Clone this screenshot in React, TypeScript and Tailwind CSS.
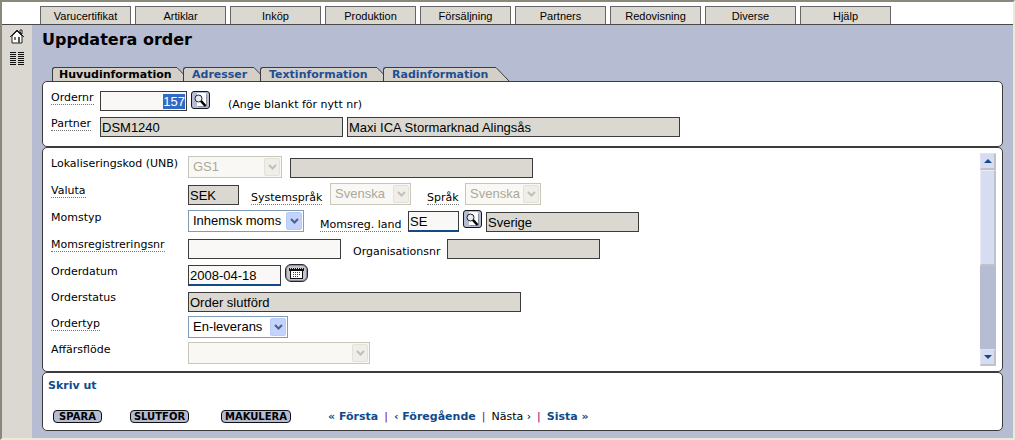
import React, { useEffect, useRef } from 'react';
import clsx from 'clsx';

const menuItems = ['Varucertifikat', 'Artiklar', 'Inköp', 'Produktion', 'Försäljning', 'Partners', 'Redovisning', 'Diverse', 'Hjälp'];

const tabs = [
  { label: 'Huvudinformation', width: 'w-[124px]' },
  { label: 'Adresser', width: 'w-[70px]' },
  { label: 'Textinformation', width: 'w-[116px]' },
  { label: 'Radinformation', width: 'w-[112px]' },
];

interface LabelProps {
  htmlFor: string;
  dotted?: boolean;
  className?: string;
  children: React.ReactNode;
}

const Label: React.FC<LabelProps> = ({ htmlFor, dotted, className, children }) => (
  <label htmlFor={htmlFor} className={clsx('shrink-0 whitespace-nowrap', className)}>
    <span className={clsx('block w-fit h-[14px] leading-[13px]', dotted && 'border-b border-dotted border-[#777]')}>{children}</span>
  </label>
);

interface FieldProps extends React.InputHTMLAttributes<HTMLInputElement> {
  required?: boolean;
}

const Field = React.forwardRef<HTMLInputElement, FieldProps>(({ className, required, ...props }, ref) => (
  <input
    ref={ref}
    type="text"
    className={clsx(
      "h-5 shrink-0 border border-[#3c3c3c] px-px font-['Liberation_Sans',Arial,sans-serif] text-[13px] leading-4 outline-none selection:bg-[#316ac5] selection:text-white",
      props.readOnly ? 'bg-[#dad8d0]' : 'bg-[#f9f8f7]',
      required && 'h-[21px] border-b-2 border-b-[#104a8c]',
      className
    )}
    {...props}
  />
));

interface DropDownProps {
  id: string;
  value: string;
  disabled?: boolean;
  className: string;
}

const DropDown: React.FC<DropDownProps> = ({ id, value, disabled, className }) => (
  <div className={clsx('relative h-[22px] shrink-0', className)}>
    <select
      id={id}
      disabled={disabled}
      defaultValue={value}
      className={clsx(
        "block h-full w-full appearance-none border pl-1 font-['Liberation_Sans',Arial,sans-serif] text-[13px] opacity-100",
        disabled ? 'border-[#c9c7ba] bg-[#f9f8f5] text-[#aca899]' : 'border-[#7f9db9] bg-white text-black'
      )}
    >
      <option>{value}</option>
    </select>
    <span
      className={clsx(
        'pointer-events-none absolute right-0.5 top-0.5 flex h-[18px] w-4 items-center justify-center rounded-[2px] border',
        disabled ? 'border-[#e4e2d8] bg-[#efeee8] text-[#c2c0b5]' : 'border-[#b9cbf3] bg-[#c3d3fd] text-[#4d6185]'
      )}
    >
      <svg width="9" height="6" viewBox="0 0 9 6" fill="none" stroke="currentColor" strokeWidth="2">
        <path d="M1 1l3.5 3.5L8 1" />
      </svg>
    </span>
  </div>
);

const SearchButton: React.FC<{ label: string }> = ({ label }) => (
  <button type="button" aria-label={label} className="flex h-[18px] w-[19px] shrink-0 items-center justify-center self-start rounded-[3px] border border-[#16161e] bg-[#b6bcd2]">
    <svg width="15" height="14" viewBox="0 0 15 14">
      <path d="M4 0h8l1 1v12H4z" fill="#fff" />
      <path d="M13.5 2v11.5H5" fill="none" stroke="#8b8f9f" />
      <circle cx="5.5" cy="5.5" r="3.5" fill="#e8ebf2" stroke="#222" />
      <path d="M8 8l4.5 5" stroke="#000" strokeWidth="2.6" />
    </svg>
  </button>
);

const CalendarButton = () => (
  <button type="button" aria-label="Välj datum" className="flex h-[18px] w-[23px] shrink-0 items-center justify-center self-start rounded-[6px] border border-[#25252b] bg-[#c4c6cf] shadow-[inset_0_0_0_1px_#8c8e98]">
    <svg width="15" height="12" viewBox="0 0 15 12" shapeRendering="crispEdges">
      <path d="M1 3h13v9H1z" fill="#111" />
      <path d="M2 4h11v7H2z" fill="#fff" />
      <path d="M0 1h15v3H0z" fill="#111" />
      <path d="M1 1h1v1H1zM3 1h1v1H3zM5 1h1v1H5zM7 1h1v1H7zM9 1h1v1H9zM11 1h1v1h-1zM13 1h1v1h-1z" fill="#ddd" />
      <path d="M4 5.5h8M4 7.5h8M4 9.5h6" stroke="#2a3f6a" strokeDasharray="1 1" />
    </svg>
  </button>
);

const ActionButton: React.FC<{ className: string; children: string }> = ({ className, children }) => (
  <button type="button" className={clsx('h-[13px] rounded-[4px] border border-[#111] bg-[#b6bcd2] text-[10px] font-bold leading-[11px] text-black', className)}>
    {children}
  </button>
);

const Row: React.FC<{ compact?: boolean; label: React.ReactNode; children: React.ReactNode }> = ({ compact, label, children }) => (
  <div className={clsx('flex items-start', compact ? 'h-[26px]' : 'h-[27px]')}>
    <div className="w-[137px] shrink-0 pt-px">{label}</div>
    <div className="flex h-[22px] items-end gap-1">{children}</div>
  </div>
);

const ScrollButton: React.FC<{ down?: boolean }> = ({ down }) => (
  <button type="button" aria-label={down ? 'Rulla ned' : 'Rulla upp'} className="flex h-[17px] w-4 items-center justify-center border border-b-2 border-r-2 border-[#dfe3f3] border-b-[#bfc3c8] border-r-[#bfc3c8] bg-[#d6dcf2]">
    <svg width="8" height="4" viewBox="0 0 8 4" fill="#104a94">
      <path d={down ? 'M0 0h8L4 4z' : 'M0 4h8L4 0z'} />
    </svg>
  </button>
);

export default function App() {
  const orderRef = useRef<HTMLInputElement>(null);

  // Order number is preselected so a new one can be typed directly
  useEffect(() => {
    orderRef.current?.focus();
    orderRef.current?.select();
  }, []);

  return (
    <div className="flex min-h-screen flex-col border-b-2 border-l-2 border-r-2 border-t-2 border-b-[#ece9d8] border-l-[#8a887a] border-r-[#ece9d8] border-t-[#8a887a] bg-white font-['DejaVu_Sans',Verdana,sans-serif] text-[11px] text-black">
      <nav className="flex h-[23px] items-end gap-1 border-b border-[#4a4a4a] pl-[38px]">
        {menuItems.map(item => (
          <button
            key={item}
            type="button"
            className="h-[18px] w-[91px] border border-b-0 border-[#666] bg-[#dad8d0] font-['Liberation_Sans',Arial,sans-serif] text-[11px] leading-[18px]"
          >
            {item}
          </button>
        ))}
      </nav>

      <div className="flex flex-1">
        <aside className="flex w-[30px] shrink-0 flex-col items-center gap-2 bg-[#dad8d0] pt-1">
          <a href="#hem" aria-label="Hem">
            <svg width="16" height="15" viewBox="0 0 16 15">
              <path d="M3 7v7h10V7L8 2z" fill="#fff" stroke="#222" />
              <path d="M1 8l7-7 7 7" fill="none" stroke="#222" />
              <path d="M11 1h2v4l-2-2z" fill="#fff" stroke="#222" />
              <path d="M5 8h2v3H5z" fill="#777" />
              <path d="M9 8h2v6H9z" fill="#555" />
            </svg>
          </a>
          <a href="#meny" aria-label="Meny">
            <svg width="14" height="13" viewBox="0 0 14 13" shapeRendering="crispEdges">
              <path d="M0 .5h6M0 2.5h6M0 4.5h6M0 6.5h6M0 8.5h6M0 10.5h6M0 12.5h6M8 .5h6M8 2.5h6M8 4.5h6M8 6.5h6M8 8.5h6M8 10.5h6M8 12.5h6" stroke="#111" />
            </svg>
          </a>
        </aside>

        <main className="min-w-0 flex-1 bg-[#b6bcd2] pl-2.5 pr-2.5 pt-1">
          <h1 className="h-[38px] text-[16px] font-bold leading-[22px]">Uppdatera order</h1>

          <div role="tablist" className="flex h-[14px] pl-2.5">
            {tabs.map((tab, i) => (
              <button
                key={tab.label}
                type="button"
                role="tab"
                aria-selected={i === 0}
                className={clsx('flex h-[14px] font-bold', i === 0 ? 'text-black' : '-ml-[7px] text-[#1f4f95]')}
              >
                <span
                  className={clsx(
                    'h-[14px] whitespace-nowrap rounded-tl-[3px] border-l border-t border-[#3c3c3c] bg-[#d4d0c8] text-left leading-[14px]',
                    i === 0 ? 'pl-1.5' : 'pl-2',
                    tab.width
                  )}
                >
                  {tab.label}
                </span>
                <svg width="14" height="14" viewBox="0 0 14 14" className="shrink-0">
                  <path d="M0 0h1l13 14H0z" fill="#d4d0c8" />
                  <path d="M0 .5h1L14 14" fill="none" stroke="#3c3c3c" />
                </svg>
              </button>
            ))}
          </div>

          <form>
            <section className="flex h-[66px] flex-col gap-1 rounded-[5px] border border-[#3c3c3c] bg-white pl-2 pt-[9px]">
              <div className="flex h-[22px] items-start gap-1">
                <Label htmlFor="ordernr" dotted className="w-[45px]">Ordernr</Label>
                <Field ref={orderRef} id="ordernr" defaultValue="157" className="w-[87px] text-right" />
                <SearchButton label="Sök order" />
                <p className="ml-3.5 pt-1.5 leading-[15px]">(Ange blankt för nytt nr)</p>
              </div>
              <div className="flex items-start gap-1">
                <Label htmlFor="partner" dotted className="w-[45px]">Partner</Label>
                <Field id="partner" readOnly value="DSM1240" className="w-[243px]" />
                <Field aria-label="Partnernamn" readOnly value="Maxi ICA Stormarknad Alingsås" className="w-[333px]" />
              </div>
            </section>

            <section className="flex justify-between rounded-[5px] border border-[#3c3c3c] bg-white pl-2 pr-1.5 pt-[5px]">
              <div className="pt-[3px] pb-[3px]">
                <Row label={<Label htmlFor="unb">Lokaliseringskod (UNB)</Label>}>
                  <DropDown id="unb" value="GS1" disabled className="mr-1 w-[94px]" />
                  <Field aria-label="Lokaliseringskod" readOnly value="" className="w-[243px]" />
                </Row>
                <Row label={<Label htmlFor="valuta" dotted>Valuta</Label>}>
                  <Field id="valuta" readOnly value="SEK" className="w-[51px]" />
                  <Label htmlFor="systemsprak" dotted className="ml-2 w-[75px]">Systemspråk</Label>
                  <DropDown id="systemsprak" value="Svenska" disabled className="mr-3 w-[81px]" />
                  <Label htmlFor="sprak" dotted className="w-[34px]">Språk</Label>
                  <DropDown id="sprak" value="Svenska" disabled className="w-[76px]" />
                </Row>
                <Row label={<Label htmlFor="momstyp">Momstyp</Label>}>
                  <DropDown id="momstyp" value="Inhemsk moms" className="w-[116px]" />
                  <Label htmlFor="momsland" dotted className="ml-3 w-[84px]">Momsreg. land</Label>
                  <Field id="momsland" required defaultValue="SE" className="w-[51px]" />
                  <SearchButton label="Sök land" />
                  <Field aria-label="Land" readOnly value="Sverige" className="w-[153px]" />
                </Row>
                <Row label={<Label htmlFor="momsregnr" dotted>Momsregistreringsnr</Label>}>
                  <Field id="momsregnr" defaultValue="" className="w-[153px]" />
                  <Label htmlFor="orgnr" className="ml-2 w-[90px]">Organisationsnr</Label>
                  <Field id="orgnr" readOnly value="" className="w-[153px]" />
                </Row>
                <Row compact label={<Label htmlFor="orderdatum">Orderdatum</Label>}>
                  <Field id="orderdatum" required defaultValue="2008-04-18" className="w-[93px]" />
                  <CalendarButton />
                </Row>
                <Row compact label={<Label htmlFor="orderstatus">Orderstatus</Label>}>
                  <Field id="orderstatus" readOnly value="Order slutförd" className="w-[333px]" />
                </Row>
                <Row compact label={<Label htmlFor="ordertyp" dotted>Ordertyp</Label>}>
                  <DropDown id="ordertyp" value="En-leverans" className="w-[100px]" />
                </Row>
                <Row compact label={<Label htmlFor="affarsflode">Affärsflöde</Label>}>
                  <DropDown id="affarsflode" value="" disabled className="w-[182px]" />
                </Row>
              </div>

              {/* Scroll bar */}
              <div className="mb-[5px] flex w-4 flex-col bg-[#b6bcd2]">
                <ScrollButton />
                <div className="h-[96px] border border-b-2 border-r-2 border-[#e9ecf8] border-b-[#bfc3c8] border-r-[#bfc3c8] bg-[#d6dcf2]" />
                <div className="flex-1" />
                <ScrollButton down />
              </div>
            </section>

            <section className="h-[59px] rounded-[5px] border border-[#3c3c3c] bg-white pl-[5px] pt-[5px]">
              <a href="#skriv-ut" className="block w-fit font-bold leading-[15px] text-[#104a8c]">Skriv ut</a>
              <div className="mt-4 flex items-center pl-[5px]">
                <ActionButton className="w-[49px]">SPARA</ActionButton>
                <ActionButton className="ml-7 w-[59px]">SLUTFÖR</ActionButton>
                <ActionButton className="ml-8 w-[70px]">MAKULERA</ActionButton>
                <div className="ml-[37px] flex gap-1.5 whitespace-nowrap leading-[15px]">
                  <a href="#forsta" className="font-bold text-[#104a8c]">« Första</a>
                  <span className="text-[#800080]">|</span>
                  <a href="#foregaende" className="font-bold text-[#104a8c]">‹ Föregående</a>
                  <span className="text-[#800080]">|</span>
                  <span>Nästa ›</span>
                  <span className="text-[#800080]">|</span>
                  <a href="#sista" className="font-bold text-[#104a8c]">Sista »</a>
                </div>
              </div>
            </section>
          </form>
        </main>
      </div>
    </div>
  );
}
